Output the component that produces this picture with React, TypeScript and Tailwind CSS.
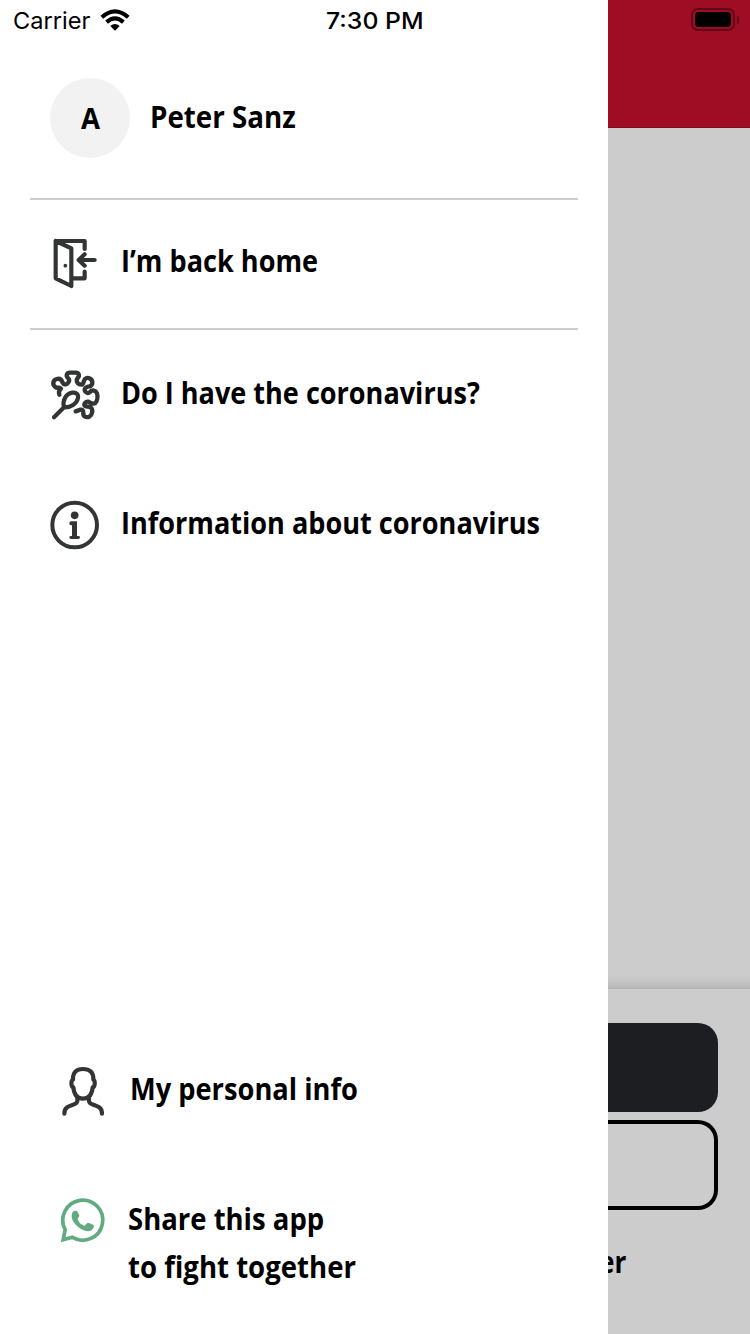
import { useLayoutEffect, useRef, useState, type ReactNode } from "react";

/** Condenses a line of text horizontally so that it fills exactly `width` pixels. */
function Fit({ text, width, className = "" }: { text: string; width: number; className?: string }) {
  const ref = useRef<HTMLSpanElement>(null);
  const [scale, setScale] = useState(1);
  useLayoutEffect(() => {
    if (ref.current) setScale(width / ref.current.offsetWidth);
  }, [text, width]);
  return (
    <span className="block" style={{ width }}>
      <span
        ref={ref}
        className={"inline-block origin-left whitespace-nowrap align-top " + className}
        style={{ transform: `scaleX(${scale})` }}
      >
        {text}
      </span>
    </span>
  );
}

const label = "text-[30px] leading-[48px] font-bold";

function Icon({ children, height = 70, color = "#333434" }: { children: ReactNode; height?: number; color?: string }) {
  return (
    <svg
      className="shrink-0"
      width={80}
      height={height}
      viewBox={`0 0 240 ${height * 3}`}
      fill="none"
      stroke={color}
      strokeWidth={12.5}
      strokeLinecap="round"
      strokeLinejoin="round"
    >
      {children}
    </svg>
  );
}

function DoorIcon() {
  return (
    <Icon height={75}>
      <path d="M134 72V48H47V160L94 183V70L47 48M98 160H134V140M164 105H118M134 88L116 105L134 122" />
      <circle cx="76" cy="122" r="5.5" fill="#333434" stroke="none" />
    </Icon>
  );
}

function VirusIcon() {
  return (
    <Icon>
      <path d="M42 172L72 142M72 142C66 122 78 101 97 98C109 96 116 103 114 114C111 131 92 143 72 142Z" />
      <path
        strokeWidth="13"
        d="M58 104C54 94 63 86 63 86C59 80 52 86 46 81C36 74 39 60 50 57C60 54 65 60 68 68C72 76 80 74 84 69C89 63 88 58 84 54C77 47 80 38 90 38H107C117 38 120 48 113 54C107 61 110 70 119 73C127 76 130 72 131 65C134 54 144 50 152 57C160 64 158 76 149 79C140 80 133 83 134 91C136 98 144 102 150 96C157 88 167 91 171 100C174 110 172 123 166 129C158 135 151 127 145 125C137 123 131 132 134 137C138 141 145 139 153 143C160 150 157 165 148 170C138 174 129 169 130 160C130 153 129 148 122 149L107 154"
      />
    </Icon>
  );
}

function InfoIcon() {
  return (
    <Icon>
      <circle cx="104" cy="105" r="67" strokeWidth="12" />
      <circle cx="104" cy="76" r="11.5" fill="#333434" stroke="none" />
      <path d="M94 94H111V138H115Q120 138 120 142Q120 147 115 147H93Q88 147 88 142Q88 138 93 138H96V106H94Q88 106 88 100Q88 94 94 94Z" fill="#333434" stroke="none" />
    </Icon>
  );
}

function PersonIcon() {
  return (
    <Icon>
      <path d="M99 42C79 42 68 52 69 74C62 76 63 96 70 97C72 117 81 131 99 131C117 131 126 117 128 97C136 96 136 76 130 74C131 52 119 42 99 42Z" />
      <path d="M82 130V138C82 155 43 144 43 176M117 130V138C117 155 156 144 156 176" />
    </Icon>
  );
}

function WhatsAppIcon() {
  return (
    <Icon height={65} color="#62ab80">
      <path strokeLinejoin="miter" strokeWidth="11" d="M47 121A60 60 0 1 1 69 144L41 151L47 121Z" transform="translate(-1.5 -2)" />
      <path
        fill="#62ab80"
        stroke="none"
        d="M69 65C73 61 80 62 83 66L88 76Q89 80 83 86C84 95 94 105 104 107L111 100Q113 98 117 99L131 105C134 112 127 122 115 124C99 123 80 111 71 96C63 83 64 70 69 65Z"
      />
    </Icon>
  );
}

function WifiIcon() {
  return (
    <svg width="30" height="22" viewBox="0 0 30 22" fill="none" stroke="#000" strokeWidth="4.1">
      <path d="M1.8 8.2Q15-3.6 28.2 8.2M6.6 13.1Q15 5.8 23.4 13.1" />
      <path d="M10.3 17.1Q15 13 19.7 17.1L15 21.8Z" fill="#000" stroke="none" />
    </svg>
  );
}

function Row({ icon, text, width }: { icon: ReactNode; text: string; width: number }) {
  return (
    <div className="flex h-[130px] items-center pl-[40px]">
      {icon}
      <div className="-mt-[5px] ml-[1px]">
        <Fit text={text} width={width} className={label} />
      </div>
    </div>
  );
}

export default function App() {
  return (
    <div className="relative flex h-[1334px] w-[750px] overflow-hidden bg-[#cccccc] font-['Open_Sans','Noto_Sans',sans-serif] text-black">
      <aside className="flex w-[608px] shrink-0 flex-col bg-white">
        <div className="h-[78px] shrink-0" />
        <div className="mx-[30px] flex h-[122px] items-start border-b-2 border-[#cfcfcf] pl-[20px]">
          <div className="flex h-[80px] w-[80px] items-center justify-center rounded-full bg-[#f2f2f2]">
            <Fit text="A" width={19} className="text-[29px] leading-[48px] font-bold" />
          </div>
          <div className="mt-[15px] ml-[20px]">
            <Fit text="Peter Sanz" width={146} className={label} />
          </div>
        </div>
        <div className="mx-[30px] flex h-[130px] items-start border-b-2 border-[#cfcfcf] pt-[25px] pl-[10px]">
          <DoorIcon />
          <div className="mt-[12px] ml-[1px]">
            <Fit text="I’m back home" width={197} className={label} />
          </div>
        </div>
        <Row icon={<VirusIcon />} text="Do I have the coronavirus?" width={359} />
        <Row icon={<InfoIcon />} text="Information about coronavirus" width={419} />
        <div className="flex-1" />
        <div className="flex h-[135px] items-start pl-[50px]">
          <PersonIcon />
          <div className="mt-[10px]">
            <Fit text="My personal info" width={228} className={label} />
          </div>
        </div>
        <div className="flex h-[144px] items-start pl-[50px]">
          <WhatsAppIcon />
          <div className="mt-[5px] ml-[-2px]">
            <Fit text="Share this app" width={196} className={label} />
            <Fit text="to fight together" width={228} className={label} />
          </div>
        </div>
      </aside>

      <main className="flex w-[142px] flex-col overflow-hidden">
        <div className="h-[128px] border-b border-[#850b20] bg-[#9f0d25]" />
        <div className="h-[861px]" />
        <div className="-mx-[30px] flex-1 px-[30px] pt-[34px] shadow-[0_0_14px_rgba(0,0,0,0.24)]">
          <div className="h-[89px] w-[110px] rounded-r-[20px] bg-[#1d1e22]" />
          <div className="mt-[8px] h-[90px] w-[110px] rounded-r-[20px] border-4 border-l-0 border-black" />
          <div className="mt-[28px] -ml-[9px]">
            <Fit text="er" width={27} className={label} />
          </div>
        </div>
      </main>

      <header className="absolute inset-x-0 top-0 flex h-[41px] items-center font-['Inter',sans-serif] text-[23px] leading-[40px]">
        <div className="flex w-[326px] items-center gap-[10px] pl-[13px]">
          <div className="pt-[1px]">
            <Fit text="Carrier" width={77} />
          </div>
          <div className="-mt-[1px]">
            <WifiIcon />
          </div>
        </div>
        <div className="pt-[1px]">
          <Fit text="7:30 PM" width={97} className="font-medium" />
        </div>
        <div className="flex-1" />
        <div className="-mt-[2px] flex items-center gap-[2px] pr-[11px]">
          <div className="h-[23px] w-[44px] rounded-[7px] border-2 border-[#60081a] p-[2px]">
            <div className="h-full w-full rounded-[4px] bg-black" />
          </div>
          <div className="h-[8px] w-[2px] rounded-r-full bg-[#60081a]" />
        </div>
      </header>
    </div>
  );
}
